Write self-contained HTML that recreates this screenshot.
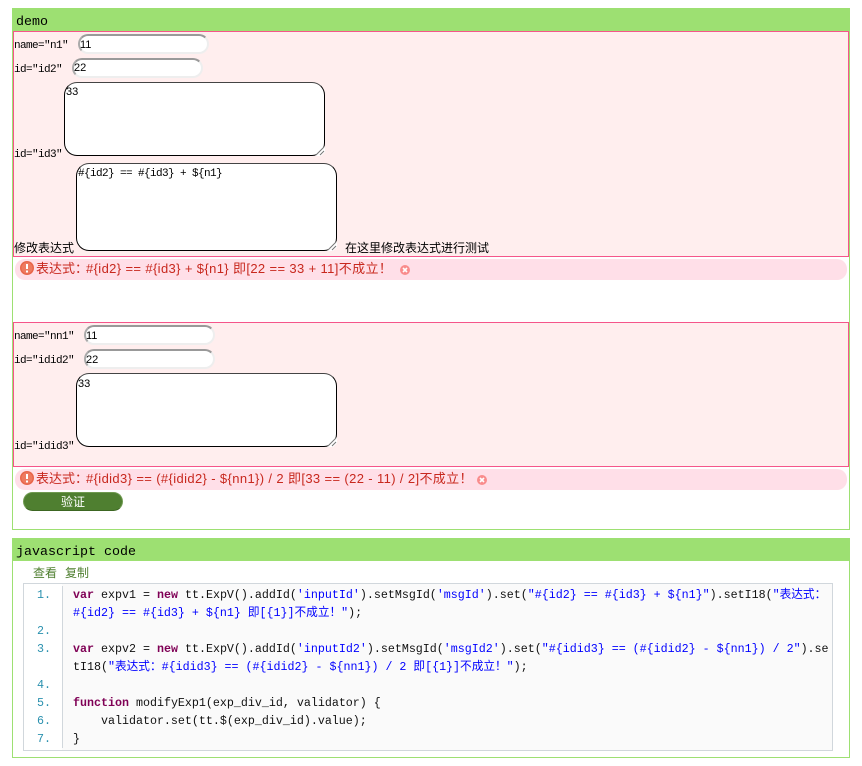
<!DOCTYPE html>
<html><head><meta charset="utf-8">
<style>
html,body{margin:0;padding:0;width:862px;height:766px;overflow:hidden;background:#fff}
div,span.a{position:absolute;box-sizing:border-box}
.t{position:absolute;white-space:pre;line-height:16px;height:16px}
.l{font:11px/16px "Liberation Mono","WenQuanYi Zen Hei",monospace;letter-spacing:-.6px;color:#000}
.d{font:11px/16px "Liberation Sans",sans-serif;color:#000}
.c{font:12px/16px "Liberation Sans","WenQuanYi Zen Hei",sans-serif;color:#000}
.h{font:13.33px/16px "Liberation Mono",monospace;color:#000}
.m{font:13px/16px "Liberation Sans","WenQuanYi Zen Hei",sans-serif;color:#c8281e}
.ms{letter-spacing:.37px}
.code{font:11.67px/16px "Liberation Mono","WenQuanYi Zen Hei",monospace;color:#111}
.code b{color:#7f0055}.code i{font-style:normal;color:#0000ff}
.n{font:11.67px/16px "Liberation Mono",monospace;color:#2b91af}
.in{background:#fff;border:2px solid #eee;border-top-color:#999;border-left-color:#aaa;border-radius:10px;width:131px;height:20px}
.ta{background:#fff;border:1px solid #000;border-top-color:#444;border-radius:13px;width:261px}
.msg{background:#ffdfe8;border-radius:10px;left:15px;width:832px;height:21px}
.pink{background:#ffeeee;border:1px solid #f5558a;left:13px;width:836px}
.green{background:#9de072}
svg{position:absolute}
</style></head><body>

<div style="left:12px;top:8px;width:838px;height:522px;border:1px solid #9de072"></div>
<div class="green" style="left:12px;top:8px;width:838px;height:24px"></div>
<span class="t h" style="left:16px;top:15px">demo</span>

<div class="pink" style="top:31px;height:226px"></div>
<span class="t l" style="left:14px;top:38px">name="n1"</span>
<div class="in" style="left:78px;top:34px"></div>
<span class="t d" style="left:80px;top:37px">11</span>
<span class="t l" style="left:14px;top:62px">id="id2"</span>
<div class="in" style="left:72px;top:58px"></div>
<span class="t d" style="left:74px;top:60px">22</span>
<span class="t l" style="left:14px;top:147px">id="id3"</span>
<div class="ta" style="left:64px;top:82px;height:74px"></div>
<span class="t d" style="left:66px;top:84px">33</span>
<svg style="left:315px;top:146px" width="10" height="10"><path d="M0 10L10 0V6L6 10Z" fill="#fff"/><path d="M1 9L9 1M5 9L9 5" stroke="#777" fill="none"/></svg>
<span class="t c" style="left:14px;top:240px">修改表达式</span>
<div class="ta" style="left:76px;top:163px;height:88px"></div>
<span class="t l" style="left:78px;top:166px">#{id2} == #{id3} + ${n1}</span>
<svg style="left:327px;top:241px" width="10" height="10"><path d="M0 10L10 0V6L6 10Z" fill="#fff"/><path d="M1 9L9 1M5 9L9 5" stroke="#777" fill="none"/></svg>
<span class="t c" style="left:345px;top:240px">在这里修改表达式进行测试</span>

<div class="msg" style="top:259px"></div>
<svg style="left:20px;top:261px" width="14" height="14"><circle cx="7" cy="7" r="7" fill="#e8664a"/><circle cx="7" cy="7" r="5.5" fill="#ee7a60"/><path d="M7 3v5" stroke="#fff" stroke-width="2"/><rect x="6" y="9.5" width="2" height="2" fill="#fff"/></svg>
<span class="t m" style="left:36px;top:261px">表达式：</span>
<span class="t m ms" style="left:86px;top:261px">#{id2} == #{id3} + ${n1} 即[22 == 33 + 11]不成立！</span>
<svg style="left:400px;top:265px" width="10" height="10"><circle cx="5" cy="5" r="5" fill="#f98c8c"/><path d="M3 3L7 7M7 3L3 7" stroke="#fff" stroke-width="1.6"/></svg>

<div class="pink" style="top:322px;height:145px"></div>
<span class="t l" style="left:14px;top:329px">name="nn1"</span>
<div class="in" style="left:84px;top:325px"></div>
<span class="t d" style="left:86px;top:328px">11</span>
<span class="t l" style="left:14px;top:353px">id="idid2"</span>
<div class="in" style="left:84px;top:349px"></div>
<span class="t d" style="left:86px;top:352px">22</span>
<span class="t l" style="left:14px;top:439px">id="idid3"</span>
<div class="ta" style="left:76px;top:373px;height:74px"></div>
<span class="t d" style="left:78px;top:376px">33</span>
<svg style="left:327px;top:437px" width="10" height="10"><path d="M0 10L10 0V6L6 10Z" fill="#fff"/><path d="M1 9L9 1M5 9L9 5" stroke="#777" fill="none"/></svg>

<div class="msg" style="top:469px"></div>
<svg style="left:20px;top:471px" width="14" height="14"><circle cx="7" cy="7" r="7" fill="#e8664a"/><circle cx="7" cy="7" r="5.5" fill="#ee7a60"/><path d="M7 3v5" stroke="#fff" stroke-width="2"/><rect x="6" y="9.5" width="2" height="2" fill="#fff"/></svg>
<span class="t m" style="left:36px;top:471px">表达式：</span>
<span class="t m ms" style="left:86px;top:471px">#{idid3} == (#{idid2} - ${nn1}) / 2 即[33 == (22 - 11) / 2]不成立！</span>
<svg style="left:477px;top:475px" width="10" height="10"><circle cx="5" cy="5" r="5" fill="#f98c8c"/><path d="M3 3L7 7M7 3L3 7" stroke="#fff" stroke-width="1.6"/></svg>

<div style="left:23px;top:492px;width:100px;height:19px;background:#4f7f30;border-radius:10px;border:1px solid #6f9a50;border-bottom-color:#3c6622"></div>
<span class="t c" style="left:61px;top:494px;color:#fff">验证</span>

<div style="left:12px;top:538px;width:838px;height:220px;border:1px solid #9de072"></div>
<div class="green" style="left:12px;top:538px;width:838px;height:23px"></div>
<span class="t h" style="left:16px;top:545px">javascript code</span>
<span class="t c" style="left:33px;top:565px;color:#4f7f30">查看</span>
<span class="t c" style="left:65px;top:565px;color:#4f7f30">复制</span>

<div style="left:23px;top:583px;width:810px;height:168px;background:#fafafa;border:1px solid #d1d7dc;border-width:1px"></div>
<div style="left:24px;top:584px;width:38px;height:166px;background:#fff"></div>
<div style="left:62px;top:586px;width:1px;height:162px;background:#d1d7dc"></div>

<span class="t n" style="left:37px;top:587px">1.</span>
<span class="t n" style="left:37px;top:623px">2.</span>
<span class="t n" style="left:37px;top:641px">3.</span>
<span class="t n" style="left:37px;top:677px">4.</span>
<span class="t n" style="left:37px;top:695px">5.</span>
<span class="t n" style="left:37px;top:713px">6.</span>
<span class="t n" style="left:37px;top:731px">7.</span>

<span class="t code" style="left:73px;top:587px"><b>var</b> expv1 = <b>new</b> tt.ExpV().addId(<i>'inputId'</i>).setMsgId(<i>'msgId'</i>).set(<i>"#{id2} == #{id3} + ${n1}"</i>).setI18(<i>"表达式：</i></span>
<span class="t code" style="left:73px;top:605px"><i>#{id2} == #{id3} + ${n1} 即[{1}]不成立！"</i>);</span>
<span class="t code" style="left:73px;top:641px"><b>var</b> expv2 = <b>new</b> tt.ExpV().addId(<i>'inputId2'</i>).setMsgId(<i>'msgId2'</i>).set(<i>"#{idid3} == (#{idid2} - ${nn1}) / 2"</i>).se</span>
<span class="t code" style="left:73px;top:659px">tI18(<i>"表达式：#{idid3} == (#{idid2} - ${nn1}) / 2 即[{1}]不成立！"</i>);</span>
<span class="t code" style="left:73px;top:695px"><b>function</b> modifyExp1(exp_div_id, validator) {</span>
<span class="t code" style="left:73px;top:713px">    validator.set(tt.$(exp_div_id).value);</span>
<span class="t code" style="left:73px;top:731px">}</span>

</body></html>
